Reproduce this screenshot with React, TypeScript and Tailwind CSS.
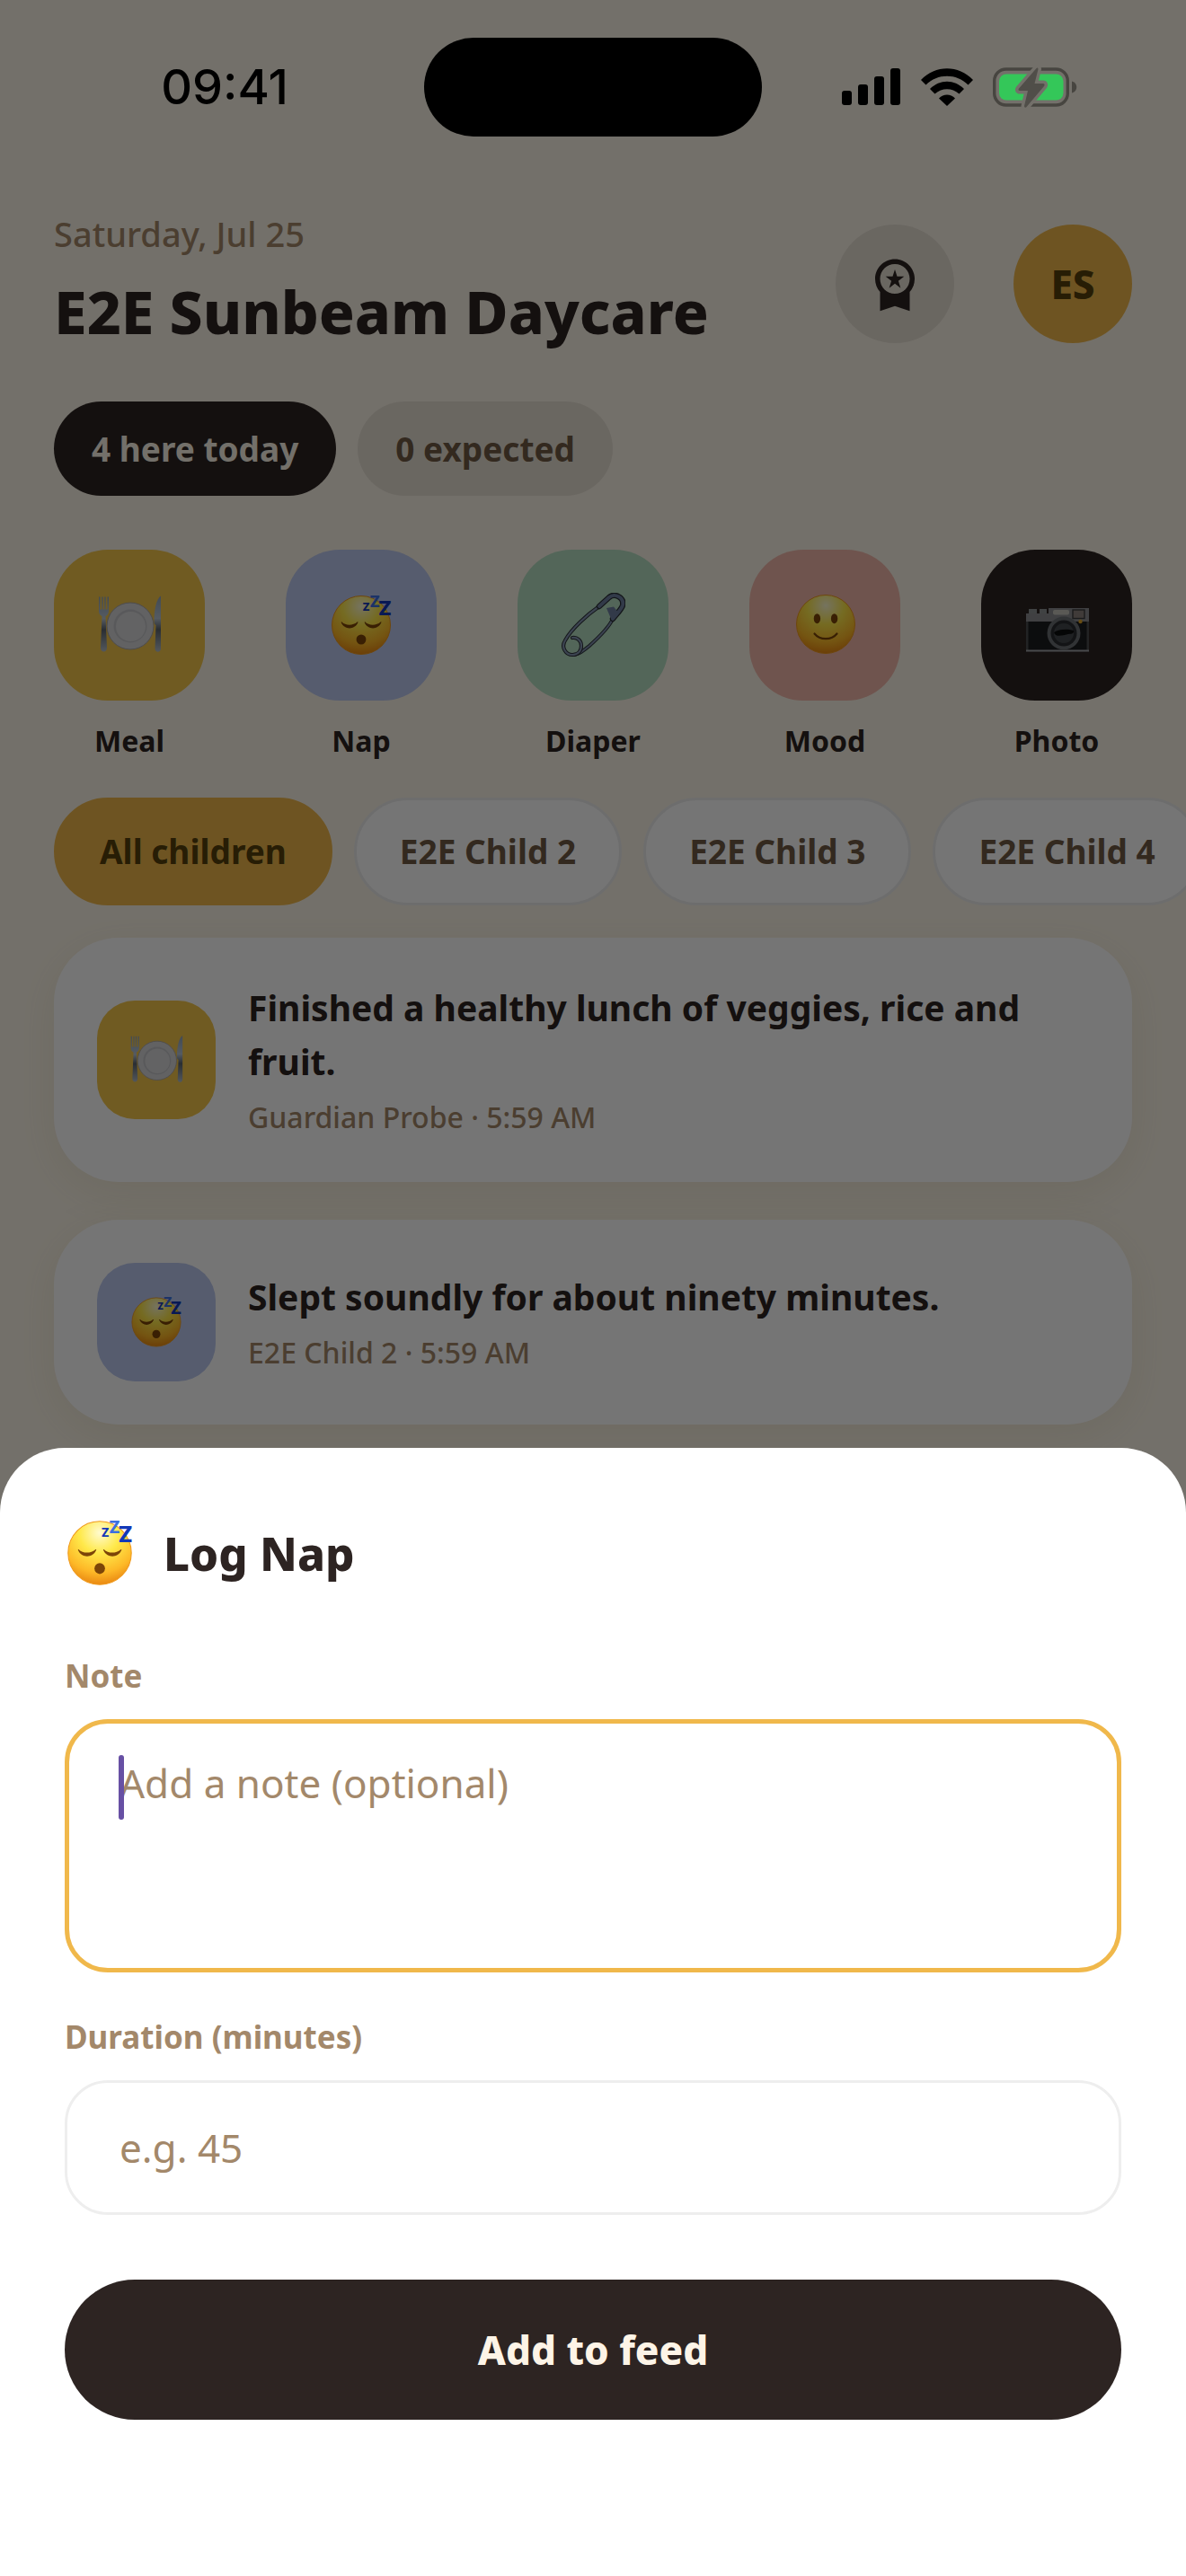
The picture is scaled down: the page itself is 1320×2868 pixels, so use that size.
import type { ReactNode } from "react";
import { MdWorkspacePremium } from "react-icons/md";
import clsx from "clsx";

function PlateIcon() {
  return (
    <svg viewBox="0 0 72 72" className="size-full" aria-hidden="true">
      <defs>
        <linearGradient id="steel" x1="0" y1="0" x2="0" y2="1">
          <stop offset="0" stopColor="#8fa3b8" />
          <stop offset="0.4" stopColor="#b9c6d6" />
          <stop offset="0.6" stopColor="#5b646e" />
          <stop offset="1" stopColor="#b4bfca" />
        </linearGradient>
      </defs>
      <path
        d="M2 4.500v16c0 3 1.500 4.500 3.500 5.500L4 61c0 6 7 6 7 0L9.500 26c2-1 3.500-2.500 3.500-5.500v-16h-1.500v14h-1.800v-14H8.300v14H6.700v-14H5.300v14H3.500v-14z"
        fill="url(#steel)"
      />
      <circle cx="37" cy="37" r="26" fill="#d5d5d8" stroke="#a7a5a8" strokeWidth="1" />
      <circle cx="37" cy="37" r="18.500" fill="#c2c3c6" />
      <circle cx="37.500" cy="37.500" r="16.500" fill="#d8d8da" />
      <path d="M71 3.500c-5 3-7.500 16-7.500 28 0 3 1 4 2 4.500L64.500 62c0 5 6.500 5 6.500 0z" fill="url(#steel)" />
    </svg>
  );
}

function FaceGradient({ id }: { id: string }) {
  return (
    <defs>
      <radialGradient id={id} cx="0.5" cy="0.18" r="0.84">
        <stop offset="0" stopColor="#fffbd0" />
        <stop offset="0.38" stopColor="#ffe94a" />
        <stop offset="0.75" stopColor="#fdb827" />
        <stop offset="1" stopColor="#e88410" />
      </radialGradient>
    </defs>
  );
}

function SleepIcon() {
  return (
    <svg viewBox="0 0 72 72" className="size-full" aria-hidden="true">
      <FaceGradient id="sleepFace" />
      <circle cx="36" cy="36" r="32.500" fill="url(#sleepFace)" stroke="#f09a1c" strokeWidth="1" />
      <g fill="#7c4508">
        <path d="M14.500 32.500c4 4.200 12.500 4.200 17 0 .8-.5 1.200 0 .8.800-3.500 8.200-15 8.200-18.500 0-.3-.9.200-1.200.7-.8z" />
        <path d="M40.500 32.500c4 4.200 12.500 4.200 17 0 .8-.5 1.200 0 .8.800-3.500 8.200-15 8.200-18.500 0-.3-.9.200-1.200.7-.8z" />
        <ellipse cx="36" cy="52" rx="5.400" ry="5.600" />
      </g>
      <g fontFamily="Inter, sans-serif" fontWeight="800" fill="#1238b8">
        <text x="37.500" y="19.500" fontSize="12">Z</text>
        <text x="45.500" y="15.500" fontSize="17" fill="#3d6fe0">Z</text>
        <text x="55" y="25" fontSize="22">Z</text>
      </g>
    </svg>
  );
}

function SmileIcon() {
  return (
    <svg viewBox="0 0 72 72" className="size-full" aria-hidden="true">
      <FaceGradient id="smileFace" />
      <circle cx="37" cy="35" r="32.500" fill="url(#smileFace)" stroke="#f09a1c" strokeWidth="1" />
      <g fill="#7c4508">
        <ellipse cx="27.400" cy="28.700" rx="3.700" ry="5.500" />
        <ellipse cx="46.600" cy="28.700" rx="3.700" ry="5.500" />
      </g>
      <path d="M24.500 45.500c6 7.500 19 7.500 25 0" fill="none" stroke="#7c4508" strokeWidth="2.200" strokeLinecap="round" />
    </svg>
  );
}

function PinIcon() {
  // one wire: down the long arm, round the coil, back up the needle
  const wire = "M43 15C30 24 12 40 5 53c-5 8 1 16 8 16 6 0 10-4 10-10s-5-10-10-9";
  const needle = "M14 69c6 0 12-5 18-10C42 50 54 38 58 29";
  const cap = "M43 15 54 5c6-5 17 0 15 9-1 4-7 10-11 15";
  return (
    <svg viewBox="0 0 72 72" className="size-full" aria-hidden="true">
      <g fill="none" strokeLinecap="round" strokeLinejoin="round">
        <path d={needle} stroke="#2b3038" strokeWidth="4" />
        <path d={needle} stroke="#7c8dab" strokeWidth="2" />
        <path d={wire} stroke="#2b3038" strokeWidth="4.200" />
        <path d={wire} stroke="#8494b0" strokeWidth="2.200" />
        <path d={cap} stroke="#2b3038" strokeWidth="6.400" />
        <path d={cap} stroke="#6d7fa0" strokeWidth="3.800" />
      </g>
      <path d="m51 17 8-1.500 6 7.500-8.500 7z" fill="#6d7fa0" />
    </svg>
  );
}

function CameraIcon() {
  return (
    <svg viewBox="0 0 72 72" className="size-full" aria-hidden="true">
      <path d="M5 18h9v5H5zM17 18h8v5h-8z" fill="#8d9093" />
      <path d="M2 23h25v-6h45v15H2z" fill="#8b8d90" />
      <path d="M2 32h70v33H2z" fill="#1c1d1f" />
      <path d="M2 32h2.500v33H2zM69.500 32H72v33h-2.500z" fill="#4a4c4f" />
      <path d="M2 63.500h70V65.500H2z" fill="#a0a2a5" />
      <rect x="32" y="19" width="18" height="5.500" rx="2" fill="#c5c3ba" />
      <rect x="54" y="19" width="13" height="9.500" fill="#8c827c" stroke="#3c3c3e" strokeWidth="1.400" />
      <circle cx="62.500" cy="32" r="2.200" fill="#e0a528" />
      <circle cx="44" cy="45" r="18.500" fill="#6c7074" />
      <circle cx="44" cy="45" r="14.500" fill="#2b2d30" />
      <circle cx="44" cy="45" r="11" fill="#45494d" />
      <path d="M33 44c6-4 15-4 22-2 1 5-5 3-10 5-5 1-11 2-12-3z" fill="#0d0e0f" />
    </svg>
  );
}

const ACTIONS: { label: string; tile: string; icon: ReactNode }[] = [
  { label: "Meal", tile: "bg-[#f4c64a]", icon: <PlateIcon /> },
  { label: "Nap", tile: "bg-[#bbc8ef]", icon: <SleepIcon /> },
  { label: "Diaper", tile: "bg-[#b6dec2]", icon: <PinIcon /> },
  { label: "Mood", tile: "bg-[#f2b8aa]", icon: <SmileIcon /> },
  { label: "Photo", tile: "bg-[#2d2422]", icon: <CameraIcon /> },
];

const FILTERS = ["All children", "E2E Child 2", "E2E Child 3", "E2E Child 4"];

const FEED = [
  {
    title: "Finished a healthy lunch of veggies, rice and fruit.",
    meta: "Guardian Probe · 5:59 AM",
    tile: "bg-[#f4c64a]",
    icon: <PlateIcon />,
  },
  {
    title: "Slept soundly for about ninety minutes.",
    meta: "E2E Child 2 · 5:59 AM",
    tile: "bg-[#bbc8ef]",
    icon: <SleepIcon />,
  },
];

function StatusBar() {
  return (
    <div className="absolute inset-x-0 top-0 z-20 grid grid-cols-[1fr_376px_1fr] items-center pt-[42px]">
      <p className="pl-7 text-center font-['Inter'] text-[54px] leading-[60px] font-medium text-black">09:41</p>
      <div className="h-[110px] rounded-full bg-black" />
      <div className="flex items-center gap-[22px] pl-[89px]">
        <svg width="66" height="42" viewBox="0 0 66 42" aria-hidden="true">
          <rect x="0" y="25" width="11" height="16" rx="3" />
          <rect x="18" y="18" width="11" height="23" rx="3" />
          <rect x="36" y="9" width="11" height="32" rx="3" />
          <rect x="54" y="0" width="11" height="41" rx="3" />
        </svg>
        <svg width="58" height="42" viewBox="0 0 58 42" aria-hidden="true">
          <path d="M0 13C16-4 42-4 58 13l-5.500 5.500C39.500 5.500 18.500 5.500 5.500 18.500z" />
          <path d="M10 23c11-11 27-11 38 0l-5.500 5.500c-8-7-19-7-27 0z" />
          <path d="M20 33.500c5-5.500 13-5.500 18 0L29 42z" />
        </svg>
        <svg width="94" height="46" viewBox="0 0 94 46" aria-hidden="true">
          <rect x="1.700" y="3" width="81.600" height="40" rx="13" fill="none" stroke="#474540" strokeWidth="3.400" />
          <rect x="7" y="8.500" width="71.500" height="29" rx="8" fill="#34c759" />
          <path d="M88 16.500c7 2 7 11 0 13z" fill="#474540" />
          <path
            d="M48.500 2 29 24.500c-1 1.500-.5 2.500 1 2.500h9l-4 17c0 2 1.500 2 2.500 1L57 22c1.200-1.500.5-3-1-3h-9.500l4-16c0-1.500-1-2-2-1z"
            fill="#504e49"
            stroke="#73706a"
            strokeWidth="7"
            strokeLinejoin="round"
            paintOrder="stroke"
          />
        </svg>
      </div>
    </div>
  );
}

function Feed() {
  return (
    <main className="px-[60px] pt-[236px]">
      <header className="flex items-center gap-[66px]">
        <div className="flex flex-1 flex-col gap-3">
          <p className="text-[38px] leading-[48px] font-medium text-[#a3886a]">Saturday, Jul 25</p>
          <h1 className="text-[66px] leading-[100px] font-extrabold">E2E Sunbeam Daycare</h1>
        </div>
        <button
          type="button"
          aria-label="Achievements"
          className="flex size-[132px] items-center justify-center rounded-full bg-[#e7e0d4]"
        >
          <MdWorkspacePremium className="size-[66px]" />
        </button>
        <button
          type="button"
          className="size-[132px] rounded-full bg-[#f0b84b] text-[44px] font-extrabold text-[#55400c]"
        >
          ES
        </button>
      </header>

      <div className="mt-[51px] flex gap-6 text-[37px] leading-[45px] font-bold">
        <p className="rounded-full bg-[#2d2422] px-[42px] py-[30px] text-[#fbf4e7]">4 here today</p>
        <p className="rounded-full bg-[#e7e0d4] px-[42px] py-[30px] text-[#6f5a45]">0 expected</p>
      </div>

      <nav className="mt-[60px] flex justify-between" aria-label="Quick log">
        {ACTIONS.map(({ label, tile, icon }) => (
          <button key={label} type="button" className="flex w-[168px] flex-col items-center gap-6">
            <span className={clsx("flex size-[168px] items-center justify-center rounded-[60px]", tile)}>
              <span className="size-[72px]">{icon}</span>
            </span>
            <span className="text-[32px] leading-[42px] font-bold">{label}</span>
          </button>
        ))}
      </nav>

      <div className="-mr-[60px] mt-[42px] flex gap-6 overflow-hidden">
        {FILTERS.map((name, i) => (
          <button
            key={name}
            type="button"
            className={clsx(
              "h-[120px] shrink-0 rounded-full border-[3px] px-12 text-[37px] font-bold",
              i === 0
                ? "border-[#f0b84b] bg-[#f0b84b] text-[#55400c]"
                : "border-[#eeeeee] bg-white text-[#6f5a45]",
            )}
          >
            {name}
          </button>
        ))}
      </div>

      <ul className="mt-9 flex flex-col gap-[42px]">
        {FEED.map(({ title, meta, tile, icon }) => (
          <li
            key={title}
            className="flex items-center gap-9 rounded-[72px] bg-white p-12 shadow-[0_12px_48px_rgba(150,135,60,0.10)]"
          >
            <span className={clsx("flex size-[132px] shrink-0 items-center justify-center rounded-[42px]", tile)}>
              <span className="size-[60px]">{icon}</span>
            </span>
            <div className="flex flex-col gap-2">
              <p className="text-[39px] leading-[60px] font-bold">{title}</p>
              <p className="text-[32px] leading-[48px] font-medium text-[#a3886a]">{meta}</p>
            </div>
          </li>
        ))}
      </ul>
    </main>
  );
}

function LogNapSheet() {
  return (
    <div className="absolute inset-0 z-10 flex flex-col justify-end bg-black/54">
      <form
        role="dialog"
        aria-labelledby="sheet-title"
        className="rounded-t-[72px] bg-white px-[72px] pt-[72px] pb-[174px]"
      >
        <div className="flex h-[90px] items-center gap-8">
          <span className="size-[78px]">
            <SleepIcon />
          </span>
          <h2 id="sheet-title" className="text-[51px] leading-[60px] font-extrabold">
            Log Nap
          </h2>
        </div>

        <div className="mt-17 flex flex-col gap-6">
          <label htmlFor="note" className="text-[35px] leading-[48px] font-bold text-[#a3886a]">
            Note
          </label>
          <div className="relative flex">
            <textarea
              id="note"
              placeholder="Add a note (optional)"
              className="h-[282px] w-full resize-none rounded-[48px] border-[5px] border-[#f0b84b] px-14 py-9 text-[44px] leading-[60px] outline-none placeholder:text-[#a3886a]"
            />
            <span className="absolute top-10 left-[60px] h-18 w-1.5 rounded-full bg-[#6750a4]" />
          </div>
        </div>

        <div className="mt-12 flex flex-col gap-6">
          <label htmlFor="duration" className="text-[35px] leading-[48px] font-bold text-[#a3886a]">
            Duration (minutes)
          </label>
          <input
            id="duration"
            type="text"
            inputMode="numeric"
            placeholder="e.g. 45"
            className="h-[150px] w-full rounded-[48px] border-[3px] border-[#eeeeee] px-[58px] text-[44px] outline-none placeholder:text-[#a3886a]"
          />
        </div>

        <button
          type="submit"
          className="mt-18 h-[156px] w-full rounded-full bg-[#2d2422] text-[44px] font-extrabold text-[#fdf4e7]"
        >
          Add to feed
        </button>
      </form>
    </div>
  );
}

export default function App() {
  return (
    <div className="relative min-h-screen overflow-hidden bg-[#fbf4e7] font-['Noto_Sans',sans-serif] text-[#2d2422]">
      <StatusBar />
      <Feed />
      <LogNapSheet />
    </div>
  );
}
